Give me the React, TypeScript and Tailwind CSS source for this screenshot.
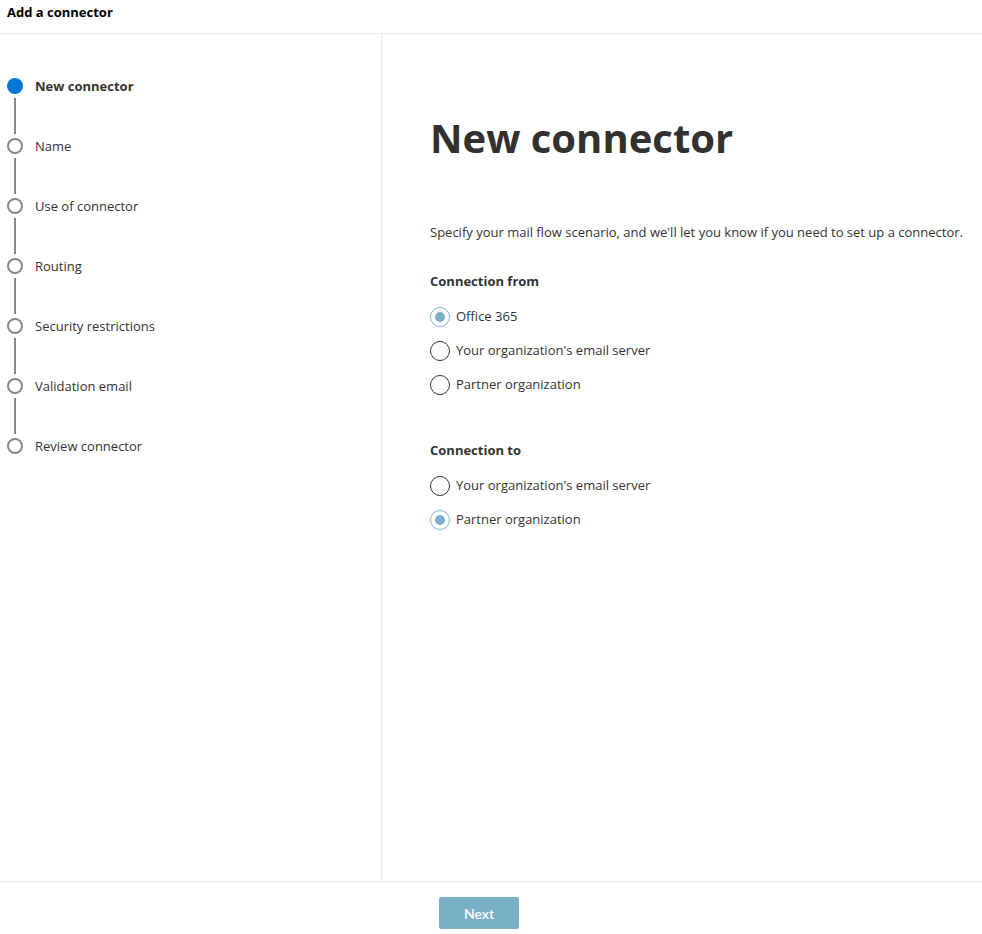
import React, { useState } from "react";

const steps = [
  "New connector",
  "Name",
  "Use of connector",
  "Routing",
  "Security restrictions",
  "Validation email",
  "Review connector",
];

const Radio: React.FC<{ label: string; checked: boolean; onClick: () => void }> = ({
  label,
  checked,
  onClick,
}) => (
  <button onClick={onClick} className="flex items-center h-[34px] text-left">
    <span
      className={`w-5 h-5 rounded-full border flex items-center justify-center ${
        checked ? "border-[#7fb3cc]" : "border-[#333333]"
      }`}>
      {checked && <span className="w-[10px] h-[10px] rounded-full bg-[#7ab0c8]" />}
    </span>
    <span className="ml-[6px] text-[13px] text-[#333333]">{label}</span>
  </button>
);

export default function App() {
  const [from, setFrom] = useState(0);
  const [to, setTo] = useState(1);

  return (
    <div
      className="h-[934px] w-[982px] flex flex-col bg-white text-[#333333]"
      style={{ fontFamily: '"Segoe UI", "Open Sans", "Noto Sans", sans-serif' }}>
      <div className="h-[34px] border-b border-[#eaeaea] px-[7px] pt-[3px]">
        <h1 className="text-[13px] font-bold leading-[18px] text-black">Add a connector</h1>
      </div>

      <div className="flex flex-1 min-h-0">
        <div className="w-[382px] border-r border-[#eaeaea] pt-[44px] pl-[7px]">
          {steps.map((s, i) => (
            <div key={s} className="flex">
              <div className="flex flex-col items-center w-4">
                {i === 0 ? (
                  <div className="w-4 h-4 rounded-full bg-[#0078d4]" />
                ) : (
                  <div className="w-4 h-4 rounded-full border-2 border-[#8a8886]" />
                )}
                {i < steps.length - 1 && <div className="w-[2px] h-[36px] my-[4px] bg-[#8a8886]" />}
              </div>
              <span
                className={`ml-3 text-[13px] leading-4 text-[#333333] ${i === 0 ? "font-bold" : ""}`}>
                {s}
              </span>
            </div>
          ))}
        </div>

        <div className="flex-1 pl-[48px] pt-[76px]">
          <h2 className="text-[40px] font-bold leading-[56px] text-[#323130]">New connector</h2>
          <p className="mt-[56px] text-[13px] leading-5">
            Specify your mail flow scenario, and we'll let you know if you need to set up a connector.
          </p>
          <h3 className="mt-[29px] text-[13px] font-bold leading-5">Connection from</h3>
          <div className="mt-[9px] flex flex-col">
            <Radio label="Office 365" checked={from === 0} onClick={() => setFrom(0)} />
            <Radio label="Your organization's email server" checked={from === 1} onClick={() => setFrom(1)} />
            <Radio label="Partner organization" checked={from === 2} onClick={() => setFrom(2)} />
          </div>
          <h3 className="mt-[38px] text-[13px] font-bold leading-5">Connection to</h3>
          <div className="mt-[9px] flex flex-col">
            <Radio label="Your organization's email server" checked={to === 0} onClick={() => setTo(0)} />
            <Radio label="Partner organization" checked={to === 1} onClick={() => setTo(1)} />
          </div>
        </div>
      </div>

      <div className="h-[53px] border-t border-[#eaeaea] flex justify-center pt-[15px] pr-[24px]">
        <button
          className="w-20 h-8 rounded-[2px] bg-[#7aafc8] text-white text-[14px] font-semibold"
          style={{ fontFamily: "Lato, sans-serif" }}>
          Next
        </button>
      </div>
    </div>
  );
}
